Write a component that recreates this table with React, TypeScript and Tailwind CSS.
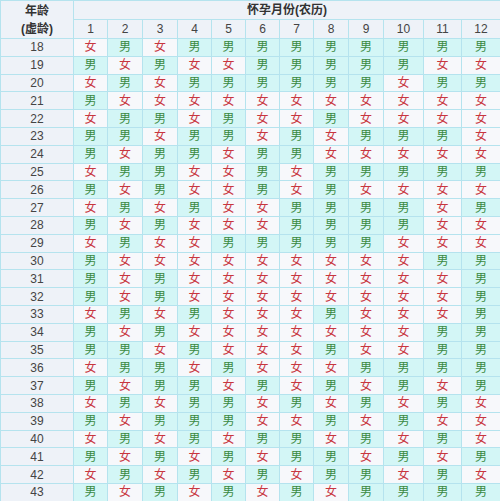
const data: [number, string][] = [
  [18, "FMFMMMMMMMMM"],
  [19, "MFMFFMMMMMFF"],
  [20, "FMFMMMMMMFMM"],
  [21, "MFFFFFFFFFFF"],
  [22, "FMMFMFFMFFFF"],
  [23, "MMFMMFMFMMMF"],
  [24, "MFMMFMMFFFFF"],
  [25, "FMMFFMFMMMMM"],
  [26, "MFMFFMFMFFFF"],
  [27, "FMFMFFMMMMFM"],
  [28, "MFMFFFMMMMFF"],
  [29, "FMFFMMMMMFFF"],
  [30, "MFFFFFFFFFMM"],
  [31, "MFMFFFFFFFFM"],
  [32, "MFMFFFFFFFFM"],
  [33, "FMFMFFFMFFFM"],
  [34, "MFMFFFFFFFMM"],
  [35, "MMFMFFFMFFMM"],
  [36, "FMMFMFFFMMMM"],
  [37, "MFMMFMFMFMFM"],
  [38, "FMFMMFMFMFMF"],
  [39, "MFMMMFFMFMFF"],
  [40, "FMFMFMMFMFMF"],
  [41, "MFMFMFMMFMFM"],
  [42, "FMFMFMFMMFMF"],
  [43, "MFMFMFMFMMMM"],
];

const colWidths = [73, 34, 35, 35, 34, 34, 34, 34, 35, 35, 40, 38, 39];

export default function App() {
  return (
    <div className="w-[500px] h-[501px] bg-white overflow-hidden">
      <table
        className="w-[500px] table-fixed border-collapse text-[12px] text-[#333]"
        style={{ fontFamily: '"Liberation Sans", Arial, "Noto Sans CJK SC", sans-serif' }}
      >
        <colgroup>
          {colWidths.map((w, i) => (
            <col key={i} style={{ width: w }} />
          ))}
        </colgroup>
        <thead>
          <tr className="h-[17px]">
            <th
              rowSpan={2}
              className="border border-[#b5e3ee] bg-[#eef2f8] font-bold text-[12px] leading-[18px] text-[#333]"
            >
              年龄
              <br />
              (虚龄)
            </th>
            <th
              colSpan={12}
              className="border border-[#b5e3ee] bg-[#eef2f8] font-bold text-[12px] text-[#333] text-center"
            >
              怀孕月份(农历)
            </th>
          </tr>
          <tr className="h-[19px]">
            {Array.from({ length: 12 }, (_, i) => (
              <th
                key={i}
                className="border border-[#b5e3ee] bg-[#eef2f8] font-normal text-[12px] text-[#444] text-center"
              >
                {i + 1}
              </th>
            ))}
          </tr>
        </thead>
        <tbody>
          {data.map(([age, row]) => (
            <tr key={age} className="h-[17.8px]">
              <td className="border border-[#b5e3ee] bg-[#eef2f8] text-center text-[#444] p-0 leading-none">
                {age}
              </td>
              {row.split("").map((g, i) =>
                g === "M" ? (
                  <td
                    key={i}
                    className="border border-[#b5e3ee] bg-[#d3f6f6] text-center text-[#3a8a3f] p-0 leading-none"
                  >
                    男
                  </td>
                ) : (
                  <td
                    key={i}
                    className="border border-[#b5e3ee] bg-[#f7f8fb] text-center text-[#c8363f] p-0 leading-none"
                  >
                    女
                  </td>
                )
              )}
            </tr>
          ))}
        </tbody>
      </table>
    </div>
  );
}
